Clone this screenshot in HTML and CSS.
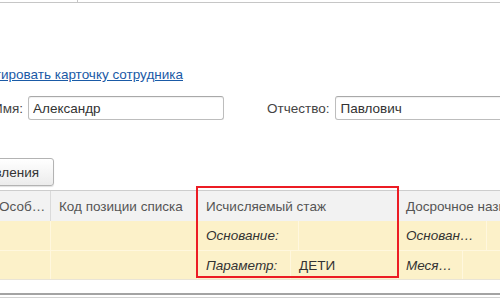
FILE: index.html
```html
<!DOCTYPE html>
<html lang="ru">
<head>
    <meta charset="UTF-8">
    <title>Карточка сотрудника</title>
    <link rel="stylesheet" href="styles.css">
</head>
<body>
    <div class="tabs"><div class="tab"></div></div>

    <div class="link-row">
        <a class="link" href="#">Редактировать карточку сотрудника</a>
    </div>

    <div class="fields">
        <div class="label-box"><label for="firstName">Имя:</label></div>
        <input type="text" id="firstName" class="field field-name" value="Александр">
        <label for="middleName" class="label-middle">Отчество:</label>
        <input type="text" id="middleName" class="field field-middle" value="Павлович">
    </div>

    <div class="button-row">
        <button type="button" class="btn">Настройка представления</button>
    </div>

    <!-- Таблица стажа -->
    <div class="grid">
        <div class="grid-head">
            <div class="cell col-1"><span class="cut">Особые условия труда</span></div>
            <div class="cell col-2">Код позиции списка</div>
            <div class="cell col-3">Исчисляемый стаж</div>
            <div class="cell col-4">Досрочное назначение пенсии</div>
        </div>
        <div class="grid-row">
            <div class="cell col-1"></div>
            <div class="cell col-2"></div>
            <div class="col-3 split">
                <div class="cell sub em" style="width: 101px;">Основание:</div>
                <div class="cell sub"></div>
            </div>
            <div class="col-4 split">
                <div class="cell sub em" style="width: 89px;"><span class="cut">Основание назначения:</span></div>
                <div class="cell sub"></div>
            </div>
        </div>
        <div class="grid-row grid-row-last">
            <div class="cell col-1"></div>
            <div class="cell col-2"></div>
            <div class="col-3 split">
                <div class="cell sub em" style="width: 93px;">Параметр:</div>
                <div class="cell sub">ДЕТИ</div>
            </div>
            <div class="col-4 split">
                <div class="cell sub em" style="width: 65px;"><span class="cut">Месяцев:</span></div>
                <div class="cell sub"></div>
            </div>
        </div>
        <div class="grid-foot"></div>
    </div>

    <!-- выделение колонки -->
    <div class="highlight"></div>
</body>
</html>
```

FILE: styles.css
```css
html, body {
    margin: 0;
    padding: 0;
}

body {
    position: relative;
    width: 500px;
    height: 300px;
    overflow: hidden;
    background-color: #fff;
    font-family: "Liberation Sans", Arial, sans-serif;
    font-size: 13.5px;
    color: #333;
}

.tabs {
    display: flex;
    height: 2px;
    border-bottom: 1px solid #c6c6c6;
}

.tabs .tab {
    width: 77px;
    border-right: 1px solid #c6c6c6;
}

/* rows that are cut on the left: content pinned to the right edge */
.link-row,
.label-box,
.button-row {
    display: flex;
    justify-content: flex-end;
    white-space: nowrap;
}

.link-row {
    width: 183px;
    margin-top: 63px;
    line-height: 17px;
}

.link {
    color: #1a5aa6;
    text-decoration: underline;
}

.fields {
    display: flex;
    align-items: center;
    margin-top: 13px;
    height: 24px;
    color: #444;
    white-space: nowrap;
}

.label-box {
    width: 23px;
    flex-shrink: 0;
}

.field {
    flex-shrink: 0;
    box-sizing: border-box;
    height: 24px;
    padding: 0 4px;
    border: 1px solid #bdbdbd;
    border-top-color: #a9a9a9;
    border-radius: 3px;
    font-family: inherit;
    font-size: 13.5px;
    color: #333;
    box-shadow: inset 0 1px 1px rgba(0, 0, 0, 0.06);
}

.field-name {
    width: 196px;
    margin-left: 5px;
}

.label-middle {
    flex-shrink: 0;
    margin-left: 43px;
    margin-right: 6px;
}

.field-middle {
    width: 200px;
}

.button-row {
    width: 54px;
    margin-top: 38px;
}

.btn {
    flex-shrink: 0;
    height: 28px;
    padding: 0 14px;
    border: 1px solid #b3b3b3;
    border-radius: 3px;
    background: linear-gradient(#ffffff, #ececec);
    box-shadow: 0 1px 1px rgba(0, 0, 0, 0.12);
    font-family: inherit;
    font-size: 13.5px;
    color: #333;
}

.grid {
    margin-top: 4px;
    margin-left: -9px;
    width: 540px;
}

.grid-head,
.grid-row {
    display: flex;
}

.grid-head {
    height: 31px;
    border-top: 1px solid #cdcdcd;
    box-sizing: border-box;
    background-color: #f2f2f2;
    color: #555;
}

.grid-row {
    height: 30px;
    background-color: #fcf1c9;
    border-bottom: 1px solid #fff7de;
    box-sizing: border-box;
}

.grid-row-last {
    height: 29px;
    border-bottom: 1px solid #e9e4d6;
}

.cell {
    box-sizing: border-box;
    display: flex;
    align-items: center;
    padding: 0 8px;
    white-space: nowrap;
    overflow: hidden;
}

.grid-head .cell {
    border-right: 1px solid #dadada;
}

.grid-row .cell,
.grid-row .split {
    border-right: 1px solid #fff7de;
}

.grid-head .col-1 {
    padding-right: 3px;
}

.col-1 { width: 60px; }
.col-2 { width: 147px; }
.col-3 { width: 200px; }
.col-4 { width: 133px; }

.split {
    display: flex;
    box-sizing: border-box;
}

.split .sub:last-child {
    flex: 1;
    border-right: none;
}

.em {
    font-style: italic;
}

.cut {
    overflow: hidden;
    text-overflow: ellipsis;
}

.grid-foot {
    height: 13px;
    border-bottom: 2px solid #a3a3a3;
    box-shadow: 0 3px 0 -1px #fff, 0 4px 0 -1px #d2d2d2;
}

.highlight {
    position: absolute;
    left: 196px;
    top: 186px;
    width: 203px;
    height: 92px;
    box-sizing: border-box;
    border: 2px solid #ec1c24;
}
```
